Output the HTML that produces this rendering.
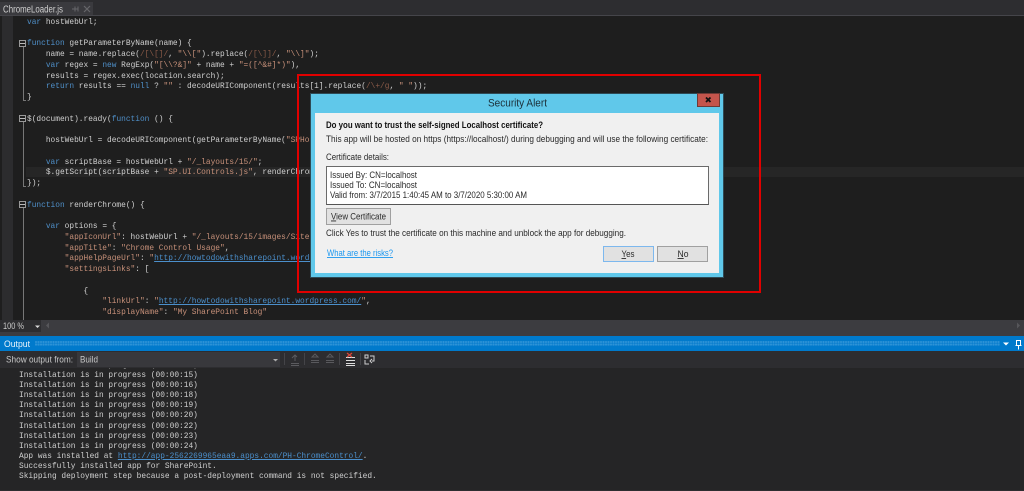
<!DOCTYPE html>
<html><head><meta charset="utf-8"><style>
html,body{margin:0;padding:0;width:1024px;height:491px;overflow:hidden;background:#2d2d30}
div{position:absolute;box-sizing:border-box}
pre{position:absolute;margin:0;font-family:"Liberation Mono",monospace;font-size:7.85px;color:#d0d0d0}
.k{color:#4f8fc8}.s{color:#c8917a}.r{color:#8a5a48}.l{color:#4b8fcb;text-decoration:underline}
svg{position:absolute;left:0;top:0}
</style></head><body>
<div style="left:0;top:0;width:1024px;height:15px;background:#2d2d30"></div>
<div style="left:0;top:2px;width:93px;height:14px;background:#3a3a3e"></div>
<div style="left:0;top:15px;width:1024px;height:1px;background:#45454a"></div>
<div style="left:0;top:16px;width:1024px;height:304px;background:#1e1e1e"></div>
<div style="left:2px;top:16px;width:11px;height:304px;background:#2c2c2e"></div>
<div style="left:26px;top:167px;width:998px;height:10px;background:#262626"></div>
<div style="left:19px;top:40px;width:7px;height:7px;border:1px solid #999"></div>
<div style="left:19px;top:115px;width:7px;height:7px;border:1px solid #999"></div>
<div style="left:19px;top:201px;width:7px;height:7px;border:1px solid #999"></div>
<div style="left:20px;top:43px;width:5px;height:1px;background:#bbb"></div>
<div style="left:20px;top:118px;width:5px;height:1px;background:#bbb"></div>
<div style="left:20px;top:204px;width:5px;height:1px;background:#bbb"></div>
<div style="left:23px;top:47px;width:1px;height:54px;background:#777"></div>
<div style="left:23px;top:100px;width:3px;height:1px;background:#777"></div>
<div style="left:23px;top:122px;width:1px;height:65px;background:#777"></div>
<div style="left:23px;top:186px;width:3px;height:1px;background:#777"></div>
<div style="left:23px;top:208px;width:1px;height:112px;background:#777"></div>
<div style="left:0;top:16px;width:1024px;height:304px;overflow:hidden">
<pre style="left:27px;top:1.8px;line-height:10.75px"><span class="k">var</span> hostWebUrl;

<span class="k">function</span> getParameterByName(name) {
    name = name.replace(<span class="r">/[\[]/</span>, <span class="s">"\\["</span>).replace(<span class="r">/[\]]/</span>, <span class="s">"\\]"</span>);
    <span class="k">var</span> regex = <span class="k">new</span> RegExp(<span class="s">"[\\?&amp;]"</span> + name + <span class="s">"=([^&amp;#]*)"</span>),
    results = regex.exec(location.search);
    <span class="k">return</span> results == <span class="k">null</span> ? <span class="s">""</span> : decodeURIComponent(results[1].replace(<span class="r">/\+/g</span>, <span class="s">" "</span>));
}

$(document).ready(<span class="k">function</span> () {

    hostWebUrl = decodeURIComponent(getParameterByName(<span class="s">"SPHostUrl"</span>));

    <span class="k">var</span> scriptBase = hostWebUrl + <span class="s">"/_layouts/15/"</span>;
    $.getScript(scriptBase + <span class="s">"SP.UI.Controls.js"</span>, renderChrome);
});

<span class="k">function</span> renderChrome() {

    <span class="k">var</span> options = {
        <span class="s">"appIconUrl"</span>: hostWebUrl + <span class="s">"/_layouts/15/images/SiteIcon.png"</span>,
        <span class="s">"appTitle"</span>: <span class="s">"Chrome Control Usage"</span>,
        <span class="s">"appHelpPageUrl"</span>: <span class="s">"</span><span class="l">http://howtodowithsharepoint.wordpress.com/</span><span class="s">"</span>,
        <span class="s">"settingsLinks"</span>: [

            {
                <span class="s">"linkUrl"</span>: <span class="s">"</span><span class="l">http://howtodowithsharepoint.wordpress.com/</span><span class="s">"</span>,
                <span class="s">"displayName"</span>: <span class="s">"My SharePoint Blog"</span>
</pre></div>
<div style="left:0;top:320px;width:1024px;height:17px;background:#3c3c40"></div>
<div style="left:0;top:320px;width:41px;height:12px;background:#2d2d30"></div>
<svg width="1024" height="491" style="z-index:1">
<path d="M35 325.5h5l-2.5 2.5z" fill="#ddd"/>
<path d="M49 322.5v6l-3-3z" fill="#56565a"/>
<path d="M1017 322.5v6l3-3z" fill="#56565a"/>
</svg>
<div style="left:0;top:336px;width:1024px;height:15px;background:#007acc"></div>
<div style="left:35px;top:341px;width:965px;height:5px;background-color:#0d80cf;background-image:radial-gradient(circle at 1px 1px,#2c92d6 0.8px,transparent 1.1px);background-size:2.5px 2.5px"></div>
<svg width="1024" height="491" style="z-index:1">
<path d="M1003 342.5h6l-3 3z" fill="#fff"/>
<path d="M1016.5 340.5h4v5h-4zM1015.5 345.5h6M1018.5 346v3.5" fill="none" stroke="#fff" stroke-width="1"/>
</svg>
<div style="left:0;top:351px;width:1024px;height:17px;background:#2d2d30"></div>
<div style="left:0;top:368px;width:1024px;height:122px;background:#252526"></div>
<div style="left:0;top:368px;width:1024px;height:122px;overflow:hidden">
<pre style="left:19px;top:-7.2px;line-height:10.12px">Installation is in progress (00:00:14)
Installation is in progress (00:00:15)
Installation is in progress (00:00:16)
Installation is in progress (00:00:18)
Installation is in progress (00:00:19)
Installation is in progress (00:00:20)
Installation is in progress (00:00:22)
Installation is in progress (00:00:23)
Installation is in progress (00:00:24)
App was installed at <span class="l">http://app-2562269965eaa9.apps.com/PH-ChromeControl/</span>.
Successfully installed app for SharePoint.
Skipping deployment step because a post-deployment command is not specified.</pre></div>
<div style="left:77px;top:352px;width:203px;height:15px;background:#38383c"></div>
<svg width="1024" height="491" style="z-index:1" fill="none" font-family="Liberation Sans, sans-serif">
<text x="3" y="329" font-size="9" textLength="21" lengthAdjust="spacingAndGlyphs" fill="#ccc">100 %</text>
<text x="4" y="347" font-size="9.5" textLength="26" lengthAdjust="spacingAndGlyphs" fill="#eaf4fb">Output</text>
<text x="6" y="362.5" font-size="9.2" textLength="67" lengthAdjust="spacingAndGlyphs" fill="#c8c8c8">Show output from:</text>
<text x="80" y="362.5" font-size="9.2" textLength="18" lengthAdjust="spacingAndGlyphs" fill="#c8c8c8">Build</text>
<path d="M273 359h5l-2.5 2.5z" fill="#aaa"/>
<path d="M284.5 353v12M304.5 353v12M339.5 353v12M360.5 353v12" stroke="#444448"/>
<path d="M291 363.5h8M291 365.5h8M295 355v6M292 358l3-3 2 2" stroke="#5b5b5f"/>
<path d="M311 360.5h8M311 362.5h8M315 354l-3 3h6z" stroke="#59595d"/>
<path d="M326 360.5h8M326 362.5h8M330 354l-3 3h6z" stroke="#59595d"/>
<path d="M346 357.5h9M346 360.5h9M346 363.5h9M346 365.5h9" stroke="#ddd"/>
<path d="M347 353l5 4M352 353l-5 4" stroke="#d9463a" stroke-width="1.3"/>
<path d="M365 355h3v3h-3zM370 356h4v5h-2M365 360v4h4M372 363l-2-2 2-2" stroke="#cfcfcf"/>
</svg>
<div style="left:0;top:490px;width:1024px;height:1px;background:#2d2d30"></div>

<div style="left:297px;top:74px;width:464px;height:219px;border:2px solid #e00000;z-index:2"></div>
<div style="left:310px;top:93px;width:414px;height:185px;background:#60c8ea;border:1px solid #2e4a55;z-index:3"></div>
<div style="left:315px;top:113px;width:404px;height:160px;background:#f0f0f0;z-index:3"></div>
<div style="left:697px;top:93px;width:23px;height:14px;background:#c4554c;border:1px solid #6e3a36;z-index:3"></div>
<div style="left:326px;top:166px;width:383px;height:39px;background:#fff;border:1px solid #6a6a6a;border-bottom-color:#555;z-index:3"></div>
<div style="left:326px;top:208px;width:65px;height:17px;background:#e1e1e1;border:1px solid #a0a0a0;z-index:3"></div>
<div style="left:603px;top:246px;width:51px;height:16px;background:#e1e1e1;border:1px solid #7db8ee;z-index:3"></div>
<div style="left:657px;top:246px;width:51px;height:16px;background:#e1e1e1;border:1px solid #a0a0a0;z-index:3"></div>
<svg width="1024" height="491" style="z-index:4" font-family="Liberation Sans, sans-serif" font-size="9" fill="#2a2a2a">
<path d="M706 97.5l4.5 4.5M710.5 97.5l-4.5 4.5" stroke="#111" stroke-width="1.8"/>
<text x="488" y="106.5" font-size="11" textLength="59" lengthAdjust="spacingAndGlyphs" fill="#1c2f38">Security Alert</text>
<text x="326" y="128" font-weight="bold" textLength="217" lengthAdjust="spacingAndGlyphs" fill="#111">Do you want to trust the self-signed Localhost certificate?</text>
<text x="326" y="142" textLength="382" lengthAdjust="spacingAndGlyphs">This app will be hosted on https (https://localhost/) during debugging and will use the following certificate:</text>
<text x="326" y="160" textLength="63" lengthAdjust="spacingAndGlyphs">Certificate details:</text>
<text x="330" y="178" textLength="87" lengthAdjust="spacingAndGlyphs">Issued By: CN=localhost</text>
<text x="330" y="188" textLength="87" lengthAdjust="spacingAndGlyphs">Issued To: CN=localhost</text>
<text x="330" y="198" textLength="197" lengthAdjust="spacingAndGlyphs">Valid from: 3/7/2015 1:40:45 AM to 3/7/2020 5:30:00 AM</text>
<text x="331" y="219.5" textLength="55" lengthAdjust="spacingAndGlyphs"><tspan text-decoration="underline">V</tspan>iew Certificate</text>
<text x="326" y="236" textLength="300" lengthAdjust="spacingAndGlyphs">Click Yes to trust the certificate on this machine and unblock the app for debugging.</text>
<text x="327" y="256" textLength="66" lengthAdjust="spacingAndGlyphs" fill="#1b97ef" text-decoration="underline">What are the risks?</text>
<text x="621.5" y="257" textLength="13" lengthAdjust="spacingAndGlyphs"><tspan text-decoration="underline">Y</tspan>es</text>
<text x="677.5" y="257" textLength="11" lengthAdjust="spacingAndGlyphs"><tspan text-decoration="underline">N</tspan>o</text>
</svg>
<svg width="1024" height="16" style="z-index:1" font-family="Liberation Sans, sans-serif">
<text x="3" y="12.5" font-size="10" textLength="60" lengthAdjust="spacingAndGlyphs" fill="#d0d0d0">ChromeLoader.js</text>
<path d="M72 9h6M75 6.5v5M78 6.5v5" stroke="#66666a" fill="none"/>
<path d="M84 6l6 6M90 6l-6 6" stroke="#66666a" stroke-width="1.2" fill="none"/>
</svg>
</body></html>
